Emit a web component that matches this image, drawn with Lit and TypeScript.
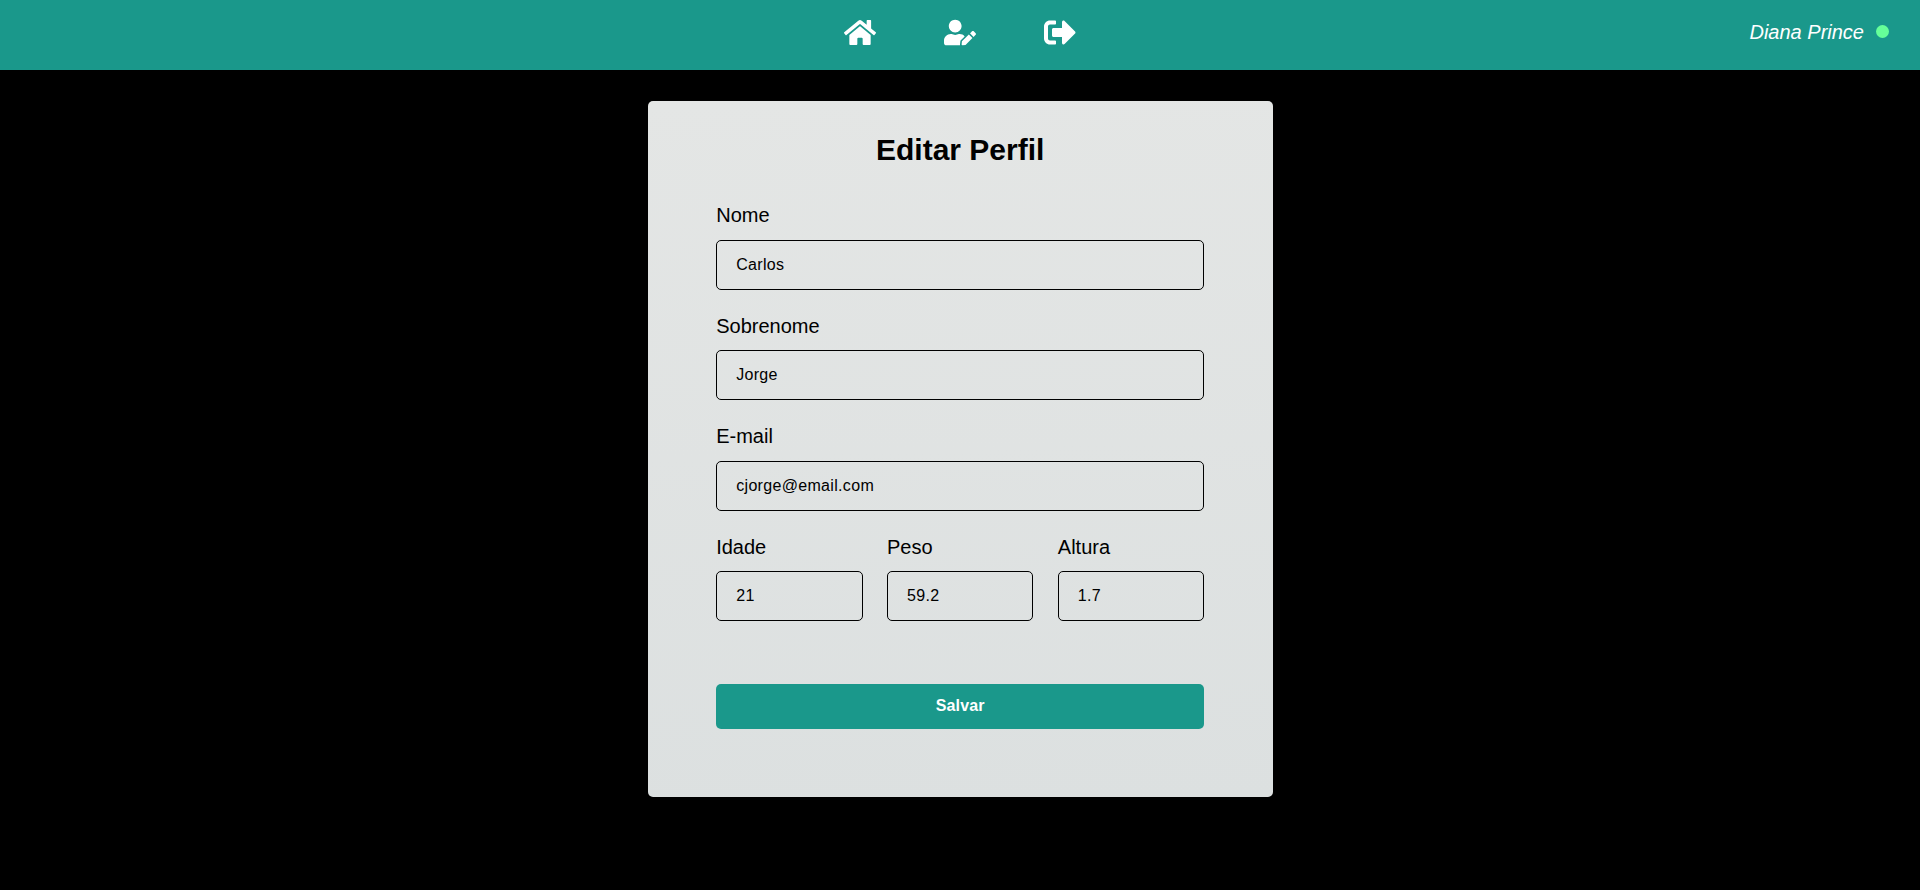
import { LitElement, html, css } from "lit";
import { customElement } from "lit/decorators.js";

const field = (label: string, value: string) => html`
  <label class="field"><span class="label">${label}</span><input class="input" .value=${value} /></label>
`;

@customElement("app-root")
export class AppRoot extends LitElement {
  static styles = css`
    :host { display: flow-root; min-height: 890px; background: #000; font-family: "Liberation Sans", Arial, sans-serif; color: #000; }
    * { box-sizing: border-box; }
    .bar { display: grid; grid-template-columns: 1fr auto 1fr; height: 70px; padding: 0 31px; background: #1a988b; }
    .nav { grid-column: 2; display: flex; gap: 68px; padding-top: 16px; }
    .icon { display: block; width: 32px; height: 33px; fill: #fff; }
    .user { justify-self: end; display: flex; align-items: center; gap: 12px; height: 63px; color: #fff; font-size: 20px; font-style: italic; }
    .name { padding-top: 2px; }
    .dot { width: 13px; height: 13px; border-radius: 50%; background: #66ff99; }
    .card { width: 625px; height: 696px; margin: 31px auto 0; padding: 30px 68.3px 0 68.7px; border-radius: 5px; background: linear-gradient(178deg, #e4e6e5, #dce0e0); }
    .title { margin: 0; font-size: 30px; line-height: 38px; text-align: center; font-weight: bold; }
    .form { padding-top: 34px; }
    .field { display: block; height: 110.4px; }
    .label { display: block; font-size: 20px; line-height: 23px; padding: 1.4px 0 12.6px; }
    .input { display: block; width: 100%; height: 50px; padding: 0 19px; border: 1px solid #000; border-radius: 5px; background: transparent; font: 16px "Liberation Sans", Arial, sans-serif; letter-spacing: 0.32px; color: #000; outline: none; }
    .row { display: grid; grid-template-columns: repeat(3, 30%); justify-content: space-between; }
    .save { display: block; width: 100%; height: 45px; margin-top: 39px; border: 0; border-radius: 5px; background: #1a988b; color: #fff; font: bold 16px "Liberation Sans", Arial, sans-serif; letter-spacing: 0.15px; }
  `;

  render() {
    return html`
      <header class="bar">
        <nav class="nav">
          <svg class="icon" viewBox="0 0 576 512"><path d="M280.37 148.26L96 300.11V464a16 16 0 0 0 16 16l112.06-.29a16 16 0 0 0 15.92-16V368a16 16 0 0 1 16-16h64a16 16 0 0 1 16 16v95.64a16 16 0 0 0 16 16.05L464 480a16 16 0 0 0 16-16V300L295.67 148.26a12.19 12.19 0 0 0-15.3 0zM571.6 251.47L488 182.56V44.05a12 12 0 0 0-12-12h-56a12 12 0 0 0-12 12v72.61L318.47 43a48 48 0 0 0-61 0L4.34 251.47a12 12 0 0 0-1.6 16.9l25.5 31A12 12 0 0 0 45.15 301l235.22-193.74a12.19 12.19 0 0 1 15.3 0L530.9 301a12 12 0 0 0 16.9-1.6l25.5-31a12 12 0 0 0-1.7-16.93z"/></svg>
          <svg class="icon" viewBox="0 0 640 512"><path d="M224 256c70.7 0 128-57.3 128-128S294.7 0 224 0 96 57.3 96 128s57.3 128 128 128zm89.6 32h-16.7c-22.2 10.2-46.9 16-72.9 16s-50.6-5.800-72.900-16h-16.700C60.200 288 0 348.200 0 422.400V464c0 26.500 21.500 48 48 48h274.900c-2.400-6.800-3.400-14-2.600-21.300l6.800-60.900 1.200-11.100 7.900-7.900 77.300-77.300c-24.500-27.700-60-45.500-99.900-45.500zm45.300 145.300l-6.800 61c-1.100 10.200 7.500 18.800 17.600 17.600l60.900-6.800 137.900-137.900-71.700-71.700-137.900 137.800zM633 268.900L595.100 231c-9.300-9.300-24.500-9.300-33.800 0l-37.800 37.800-4.100 4.100 71.800 71.700 41.800-41.800c9.300-9.400 9.300-24.500 0-33.900z"/></svg>
          <svg class="icon" viewBox="0 0 512 512"><path d="M497 273L329 441c-15 15-41 4.500-41-17v-96H152c-13.300 0-24-10.700-24-24v-96c0-13.300 10.700-24 24-24h136V88c0-21.400 25.900-32 41-17l168 168c9.300 9.400 9.300 24.600 0 34zM192 436v-40c0-6.600-5.400-12-12-12H96c-17.700 0-32-14.300-32-32V160c0-17.700 14.300-32 32-32h84c6.600 0 12-5.400 12-12V76c0-6.600-5.400-12-12-12H96c-53 0-96 43-96 96v192c0 53 43 96 96 96h84c6.600 0 12-5.400 12-12z"/></svg>
        </nav>
        <div class="user"><span class="name">Diana Prince</span><span class="dot"></span></div>
      </header>
      <main class="card">
        <h1 class="title">Editar Perfil</h1>
        <div class="form">
          ${field("Nome", "Carlos")}
          ${field("Sobrenome", "Jorge")}
          ${field("E-mail", "cjorge@email.com")}
          <div class="row">${field("Idade", "21")}${field("Peso", "59.2")}${field("Altura", "1.7")}</div>
          <button class="save">Salvar</button>
        </div>
      </main>
    `;
  }
}
